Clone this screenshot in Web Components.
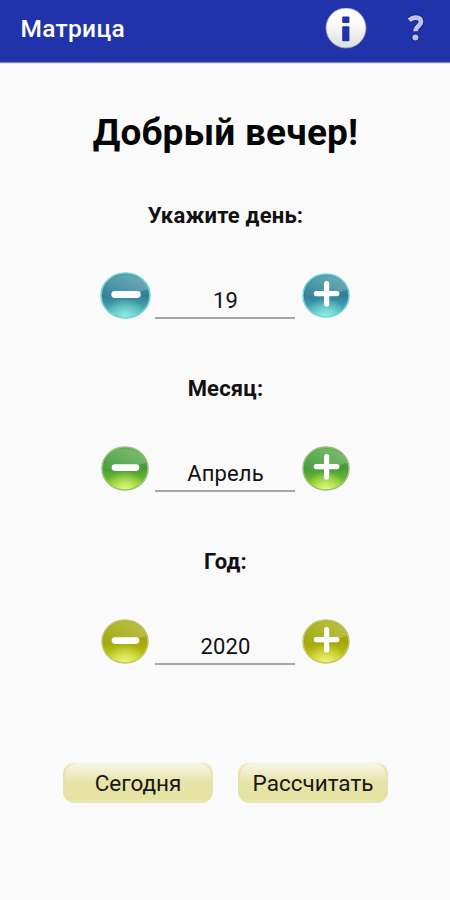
<!DOCTYPE html>
<html lang="ru"><head><meta charset="utf-8"><title>Матрица</title>
<style>html,body{margin:0;background:#fafafa}body{font-family:Roboto,"Noto Sans",sans-serif;color:#111}</style></head>
<body><matrix-app></matrix-app>
<script>
class MatrixBase extends HTMLElement{
  constructor(){super();this.attachShadow({mode:'open'});}
  connectedCallback(){this.shadowRoot.innerHTML=this.view();}
}
customElements.define('app-bar',class extends MatrixBase{view(){return `
<style>:host{display:flex;box-sizing:border-box;height:62px;background:#2033ab;color:#fff;align-items:center;padding:0 25px 5px 20.5px;box-shadow:0 1px 1px #7d86c6}
.t{font-weight:500;font-size:24.5px;line-height:28px;letter-spacing:.3px;flex:1;padding-top:1px}svg{display:block}.i{margin-right:40px}</style>
<div class="t"><slot></slot></div>
<svg class="i" width="42" height="42" viewBox="0 0 42 42"><defs><linearGradient id="g" x2="0" y2="1"><stop offset=".3" stop-color="#fff"/><stop offset="1" stop-color="#dedede"/></linearGradient></defs><circle cx="21" cy="20" r="20" fill="url(#g)" stroke="#8d95c8" stroke-width=".8"/><rect x="17.2" y="8.4" width="7.2" height="6.6" rx=".8" fill="#2033ab"/><rect x="17.2" y="18.2" width="7.2" height="15" rx=".8" fill="#2033ab"/></svg>
<svg width="18" height="30" viewBox="0 0 18 30"><g fill="none" stroke="#18237c" stroke-width="6.6"><path d="M2.2 6.2C4.4 4.3 6.5 3.5 8.8 3.6c3.5.1 5.2 1.7 5.2 4.2 0 4.2-5.5 4.2-5.5 9.4"/></g><circle cx="8.4" cy="23.4" r="3.8" fill="#18237c"/><path d="M2.2 6.2C4.4 4.3 6.5 3.5 8.8 3.6c3.5.1 5.2 1.7 5.2 4.2 0 4.2-5.5 4.2-5.5 9.4" fill="none" stroke="#bfc2ed" stroke-width="4.7"/><circle cx="8.4" cy="23.4" r="3" fill="#bfc2ed"/></svg>`}});
customElements.define('orb-button',class extends MatrixBase{view(){
 const c={blue:['#4c9cab','#2f7f97','#53bcbd','#74d3d2','#8ff0e6'],green:['#5fae52','#449b38','#93d023','#97c07c','#e2fa7e'],gold:['#abb31a','#a2a50c','#c7d016','#c2c670','#edf580']}[this.getAttribute('tone')];
 const w=+this.getAttribute('w')||48,h=+this.getAttribute('h')||45,plus=this.getAttribute('kind')==='plus';
 return `<style>:host{display:block}svg{display:block}</style>
<svg width="${w}" height="${h}" viewBox="0 0 48 45" preserveAspectRatio="none"><defs>
<linearGradient id="b" x2="0" y2="1"><stop stop-color="${c[0]}"/><stop offset=".5" stop-color="${c[1]}"/><stop offset=".95" stop-color="${c[2]}"/></linearGradient>
<radialGradient id="l" cx=".5" cy="1" r=".45"><stop stop-color="${c[4]}"/><stop offset="1" stop-color="${c[4]}" stop-opacity="0"/></radialGradient>
<linearGradient id="s" x2="1" y2="0"><stop stop-color="#fff" stop-opacity=".04"/><stop offset="1" stop-color="#fff" stop-opacity=".22"/></linearGradient></defs>
<ellipse cx="24" cy="22.5" rx="23.2" ry="21.7" fill="url(#b)"/><ellipse cx="24" cy="22.5" rx="23" ry="21.5" fill="url(#l)"/>
<path d="M3 23C3 11 12 3 24 3s21 8 21 14c-9 1-11 6-21 7-8 1-13 0-21-1Z" fill="url(#s)"/>
<ellipse cx="24" cy="22.5" rx="23" ry="21.5" fill="none" stroke="${c[3]}" stroke-width="1.5"/>
<path d="${plus?'M14.4 20.6H34.8M24.6 10.6V31':'M14 21.6H35'}" stroke="#fff" stroke-width="${plus?5.2:6.6}" stroke-linecap="round"/></svg>`}});
customElements.define('value-stepper',class extends MatrixBase{view(){
 const t=this.getAttribute('tone'),b=t==='blue';return `
<style>:host{display:grid;grid-template-columns:51px 140px 48px;column-gap:4px;height:49px;width:250px;align-items:end;margin-left:-1px}
.f{box-sizing:border-box;height:49px;border-bottom:2px solid #a6a6a6;text-align:center;font-size:22px;line-height:26px;padding:18px 0 0 1px;letter-spacing:.15px}
.m{margin:0 0 ${b?0:1}px ${b?0:.5}px}.p{margin:0 0 1px 2.5px}</style>
<orb-button class="m" tone="${t}" kind="minus" w="${b?51:48}" h="${b?47:45}"></orb-button><div class="f"><slot></slot></div><orb-button class="p" tone="${t}" kind="plus"></orb-button>`}});
customElements.define('gel-button',class extends MatrixBase{view(){return `
<style>:host{display:block;box-sizing:border-box;width:150px;height:42px;border-radius:12px;background:linear-gradient(#fafaf4,#f0eecb 25%,#e6e4a8 50%,#e4e3a1 88%,#eae9ba);text-align:center;font-size:22.5px;line-height:44px;color:#171717;letter-spacing:0;position:relative}
:host::before{content:"";position:absolute;inset:2px 0 0;border-radius:12px;box-shadow:inset 2px 0 1px #e5e3ab,inset -2px 0 1px #e5e3ab}</style><slot></slot>`}});
customElements.define('matrix-app',class extends MatrixBase{view(){return `
<style>:host{display:block;height:900px;background:#fafafa}
main{display:flex;flex-direction:column;align-items:center;padding-left:1px}
h1{margin:49px 0 0;font-size:37px;line-height:44px;font-weight:700;letter-spacing:.2px;color:#060606}
h2{margin:0;font-size:22px;line-height:26px;font-weight:700;letter-spacing:.2px}
.a{margin-top:48px}.b{margin-top:57px}value-stepper{margin-top:41px}
footer{display:flex;gap:25px;margin-top:96px}</style>
<app-bar>Матрица</app-bar><main><h1>Добрый вечер!</h1>
<h2 class="a">Укажите день:</h2><value-stepper tone="blue">19</value-stepper>
<h2 class="b">Месяц:</h2><value-stepper tone="green">Апрель</value-stepper>
<h2 class="b">Год:</h2><value-stepper tone="gold">2020</value-stepper>
<footer><gel-button>Сегодня</gel-button><gel-button>Рассчитать</gel-button></footer></main>`}});
</script></body></html>
